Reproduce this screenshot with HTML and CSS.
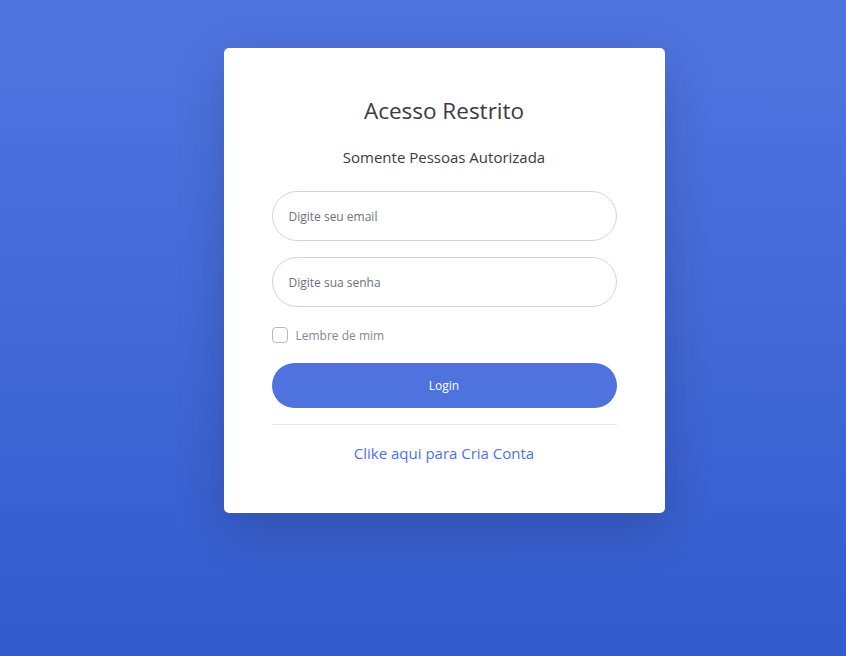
FILE: index.html
```html
<!DOCTYPE html>
<html lang="pt-BR">
<head>
<meta charset="utf-8">
<title>Acesso Restrito</title>
<link rel="stylesheet" href="styles.css">
</head>
<body>
<div class="page">
  <div class="card">
    <div class="text-center">
      <h1 class="title">Acesso Restrito</h1>
      <p class="subtitle">Somente Pessoas Autorizada</p>
    </div>
    <form class="form">
      <div class="form-group">
        <input type="email" class="form-control" placeholder="Digite seu email">
      </div>
      <div class="form-group">
        <input type="password" class="form-control" placeholder="Digite sua senha">
      </div>
      <div class="form-group check-row">
        <span class="check-box"></span>
        <label class="check-label">Lembre de mim</label>
      </div>
      <button type="button" class="btn">Login</button>
    </form>
    <hr class="divider">
    <div class="text-center">
      <a class="link" href="#">Clike aqui para Cria Conta</a>
    </div>
  </div>
</div>
</body>
</html>
```
FILE: styles.css
```css
html, body {
  margin: 0;
  padding: 0;
  height: 100%;
}
body {
  font-family: "Open Sans", "Noto Sans", sans-serif;
  color: #5a5c69;
  background-color: #4e73df;
  background-image: linear-gradient(180deg, #4e73df 10%, #335bcc 100%);
}
.page {
  display: flex;
  justify-content: center;
  padding: 48px 0 0 42px;
}
.card {
  width: 441px;
  box-sizing: border-box;
  background: #fff;
  border-radius: 5px;
  padding: 48px;
  box-shadow: 0 16px 48px rgba(0, 0, 0, 0.175);
}
.text-center { text-align: center; }
.title {
  margin: 0 0 20px;
  font-size: 22.5px;
  font-weight: 400;
  line-height: 29px;
  color: #3a3b45;
}
.subtitle {
  margin: 0 0 22px;
  font-size: 15px;
  line-height: 24px;
  color: #3a3b45;
}
.form { margin: 0; }
.form-group { margin-bottom: 16px; }
.form-control {
  display: block;
  width: 100%;
  box-sizing: border-box;
  height: 50px;
  padding: 0 16px;
  font-family: inherit;
  font-size: 12px;
  color: #6e707e;
  background: #fff;
  border: 1px solid #d1d3e2;
  border-radius: 160px;
  outline: none;
}
.form-control::placeholder { color: #6e707e; opacity: 1; }
.check-row {
  display: flex;
  align-items: center;
  height: 24px;
}
.check-box {
  width: 16px;
  height: 16px;
  box-sizing: border-box;
  border: 1px solid #b7b9cc;
  border-radius: 4px;
  background: #fff;
}
.check-label {
  margin-left: 8px;
  font-size: 12px;
  color: #858796;
}
.btn {
  display: block;
  width: 100%;
  height: 45px;
  border: 0;
  border-radius: 160px;
  background: #4e73df;
  color: #fff;
  font-family: inherit;
  font-size: 12px;
  cursor: pointer;
}
.divider {
  margin: 16px 0;
  border: 0;
  border-top: 1px solid rgba(0, 0, 0, 0.1);
}
.link {
  display: inline-block;
  font-size: 15px;
  line-height: 24px;
  color: #4e73df;
  text-decoration: none;
}
```
